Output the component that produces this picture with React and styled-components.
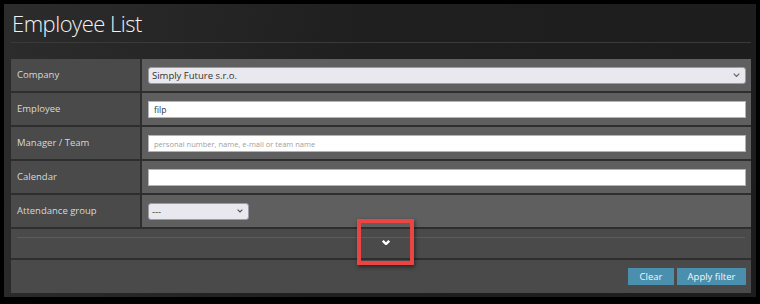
import styled, { createGlobalStyle } from "styled-components";

const GlobalStyle = createGlobalStyle`
  html, body {
    margin: 0;
    background: #000;
  }
  * {
    box-sizing: border-box;
  }
`;

const Frame = styled.div`
  width: 760px;
  height: 304px;
  padding: 4px 4px 7px 4px;
  background: #000;
  font-family: "Open Sans", "Noto Sans", sans-serif;
`;

const Panel = styled.div`
  height: 100%;
  padding: 0 5px 4px 7px;
  background: linear-gradient(100deg, #2c2c2c 0%, #262626 22%, #1f1f1f 45%, #1d1d1d 100%);
  display: flex;
  flex-direction: column;

  & > * {
    flex-shrink: 0;
  }
`;

const Header = styled.div`
  height: 39px;
  border-bottom: 1px solid #3a3a3a;
  margin-bottom: 16px;
  padding: 5px 0 0 1px;
`;

const Title = styled.h1`
  margin: 0;
  font-size: 22px;
  font-weight: 300;
  color: #f2f2f2;
  line-height: 28px;
  letter-spacing: -0.5px;
`;

const Table = styled.div`
  position: relative;
  display: flex;
  flex-direction: column;
`;

const Row = styled.div`
  display: grid;
  grid-template-columns: 129px 1fr;
  height: 34px;
  border-bottom: 2px solid #2e2e2e;
`;

const Label = styled.div`
  display: flex;
  align-items: center;
  padding: 0 0 1px 6px;
  background: #4a4a4a;
  color: #d8d8d8;
  font-size: 9.5px;
`;

const Cell = styled.div`
  display: flex;
  align-items: center;
  padding: 0 5px 0 6px;
  background: #5f5f5f;
  border-left: 2px solid #2e2e2e;
`;

const Input = styled.input`
  width: 100%;
  height: 17px;
  padding: 0 5px;
  border: 1px solid #b4b4b4;
  background: #fff;
  font-family: inherit;
  font-size: 8.5px;
  color: #333;
  outline: none;

  &::placeholder {
    color: #a0a0a0;
    font-size: 7.5px;
  }
`;

const Select = styled.div`
  display: flex;
  align-items: center;
  justify-content: space-between;
  width: ${props => props.width || "100%"};
  height: 17px;
  padding: 0 5px 0 3px;
  border: 1px solid #9c9ca4;
  border-radius: 3px;
  background: #e8e8ee;
  color: #333;
  font-size: 9.5px;
`;

const Chevron = ({ size = 8, color = "#555", stroke = 1.2 }) => (
  <svg width={size} height={size * 0.6} viewBox="0 0 10 6">
    <path d="M1 1 L5 5 L9 1" fill="none" stroke={color} strokeWidth={stroke * 10 / size} />
  </svg>
);

const ExpandRow = styled.div`
  height: 31px;
  padding: 8px 6px 0 6px;
  background: #4a4a4a;
  border-bottom: 2px solid #2e2e2e;
`;

const Divider = styled.div`
  height: 1px;
  background: #5c5c5c;
`;

const Toggle = styled.div`
  display: flex;
  justify-content: center;
  padding: 2px 0 0 10px;
`;

const Highlight = styled.div`
  position: absolute;
  left: 346px;
  top: 160px;
  width: 57px;
  height: 46px;
  border: 4px solid #ec4343;
  box-shadow: 1px 2px 4px rgba(0, 0, 0, 0.5);
  pointer-events: none;
`;

const Footer = styled.div`
  display: flex;
  justify-content: flex-end;
  gap: 3px;
  height: 33px;
  padding: 8px 5px 0 0;
  background: #4a4a4a;
`;

const Button = styled.button`
  width: ${props => props.w}px;
  height: 17px;
  padding: 0;
  border: none;
  background: #4a8fad;
  color: #f4f8fa;
  font-family: inherit;
  font-size: 9.5px;
  cursor: pointer;
`;

function App() {
  return (
    <Frame>
      <GlobalStyle />
      <Panel>
        <Header>
          <Title>Employee List</Title>
        </Header>
        <Table>
          <Row>
            <Label>Company</Label>
            <Cell>
              <Select>
                <span>Simply Future s.r.o.</span>
                <Chevron size={7} color="#666" />
              </Select>
            </Cell>
          </Row>
          <Row>
            <Label>Employee</Label>
            <Cell>
              <Input defaultValue="filp" />
            </Cell>
          </Row>
          <Row>
            <Label>Manager / Team</Label>
            <Cell>
              <Input placeholder="personal number, name, e-mail or team name" />
            </Cell>
          </Row>
          <Row>
            <Label>Calendar</Label>
            <Cell>
              <Input />
            </Cell>
          </Row>
          <Row>
            <Label>Attendance group</Label>
            <Cell>
              <Select width="101px">
                <span>---</span>
                <Chevron size={6} color="#555" />
              </Select>
            </Cell>
          </Row>
          <ExpandRow>
            <Divider />
            <Toggle>
              <Chevron size={8} color="#fff" stroke={2.4} />
            </Toggle>
          </ExpandRow>
          <Footer>
            <Button w={46}>Clear</Button>
            <Button w={69}>Apply filter</Button>
          </Footer>
          <Highlight />
        </Table>
      </Panel>
    </Frame>
  );
}

export default App;
